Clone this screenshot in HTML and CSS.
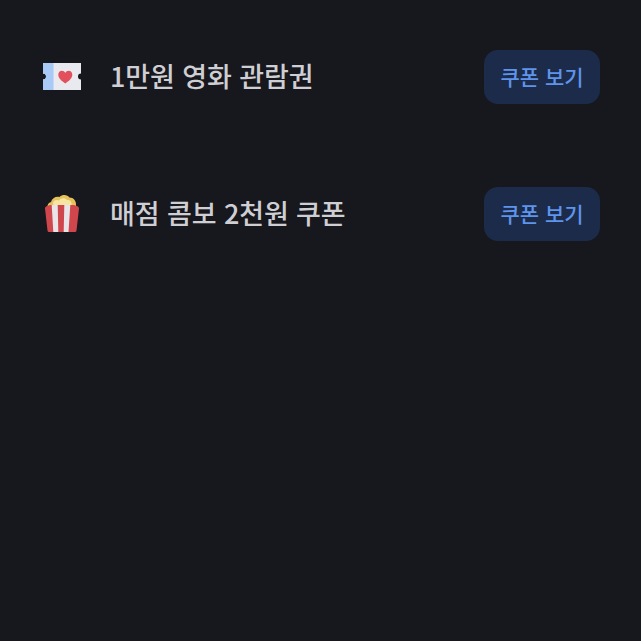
FILE: index.html
```html
<!DOCTYPE html>
<html lang="ko">

<head>
    <meta charset="UTF-8">
    <meta name="viewport" content="width=device-width, initial-scale=1.0">
    <title>쿠폰</title>
    <link rel="stylesheet" href="styles.css">
</head>

<body>
    <ul class="coupon-list">
        <li class="coupon-item">
            <div class="coupon-info">
                <svg class="coupon-icon" viewBox="0 0 40 40" aria-hidden="true">
                    <path fill="#e9e9f0" d="M1 6h38v10.500a3 3 0 0 0 0 6V33H1V22.500a3 3 0 0 0 0-6z" />
                    <path fill="#a9c9f6" d="M1 6h10.500v27H1V22.500a3 3 0 0 0 0-6z" />
                    <path fill="#e2505c" d="M23.300 26.500c-3.500-2.600-7-5-7-8.800 0-2.300 1.700-3.900 3.600-3.900 1.500 0 2.700.9 3.400 2.200.7-1.300 1.900-2.200 3.400-2.200 1.900 0 3.600 1.600 3.600 3.900 0 3.800-3.500 6.200-7 8.800z" />
                </svg>
                <span class="coupon-name">1만원 영화 관람권</span>
            </div>
            <button type="button" class="coupon-btn">쿠폰 보기</button>
        </li>
        <li class="coupon-item">
            <div class="coupon-info">
                <svg class="coupon-icon" viewBox="0 0 40 40" aria-hidden="true">
                    <path fill="#e6c25a" d="M5.500 14c-.5-3 1-5.500 3.500-6 1-4 5-6 8.500-5 3-3 8-2.500 10 .5 4 0 7 3.500 6.500 8l-1 6.500H7z" />
                    <path fill="#f6e6a4" d="M11 9c.5-2.500 3.500-4 6-2.500 1.500-2.500 6-3 8-.5 2.500-.5 5 1.500 4.500 4.500l-1 3.500H12.500z" />
                    <path fill="#cf474d" d="M3 14.500c0-1 .7-2 2-2.500l3-1h24l3 1c1.300.5 2 1.500 2 2.500l-2.500 22c-.1 1-.9 1.500-1.800 1.500H7.300c-.9 0-1.700-.5-1.800-1.500z" />
                    <path fill="#e9e4e8" d="M9.700 11h6l.6 27h-5zM22.300 11h6l-1.800 27h-4.800z" />
                </svg>
                <span class="coupon-name">매점 콤보 2천원 쿠폰</span>
            </div>
            <button type="button" class="coupon-btn">쿠폰 보기</button>
        </li>
    </ul>
</body>

</html>
```

FILE: styles.css
```css
html,
body {
    height: 100%;
}

body {
    margin: 0;
    background-color: #17171e;
    color: #cfcfd3;
    font-family: "Noto Sans CJK KR", "Noto Sans", sans-serif;
    overflow: hidden;
}

.coupon-list {
    list-style: none;
    margin: 0;
    padding: 50px 41px 0 42px;
    display: flex;
    flex-direction: column;
    gap: 83px;
}

.coupon-item {
    display: flex;
    align-items: center;
    justify-content: space-between;
}

.coupon-info {
    display: flex;
    align-items: center;
    gap: 28px;
}

.coupon-icon {
    width: 40px;
    height: 40px;
    flex-shrink: 0;
}

.coupon-name {
    font-size: 27px;
    font-weight: 500;
    letter-spacing: -0.1px;
    line-height: 36px;
    margin-top: -2px;
}

.coupon-btn {
    width: 116px;
    height: 54px;
    padding: 0 0 2px;
    border: 0;
    border-radius: 14px;
    background-color: #1c2b49;
    color: #5f94ec;
    font-family: inherit;
    font-size: 21px;
    font-weight: 500;
    cursor: pointer;
}
```
